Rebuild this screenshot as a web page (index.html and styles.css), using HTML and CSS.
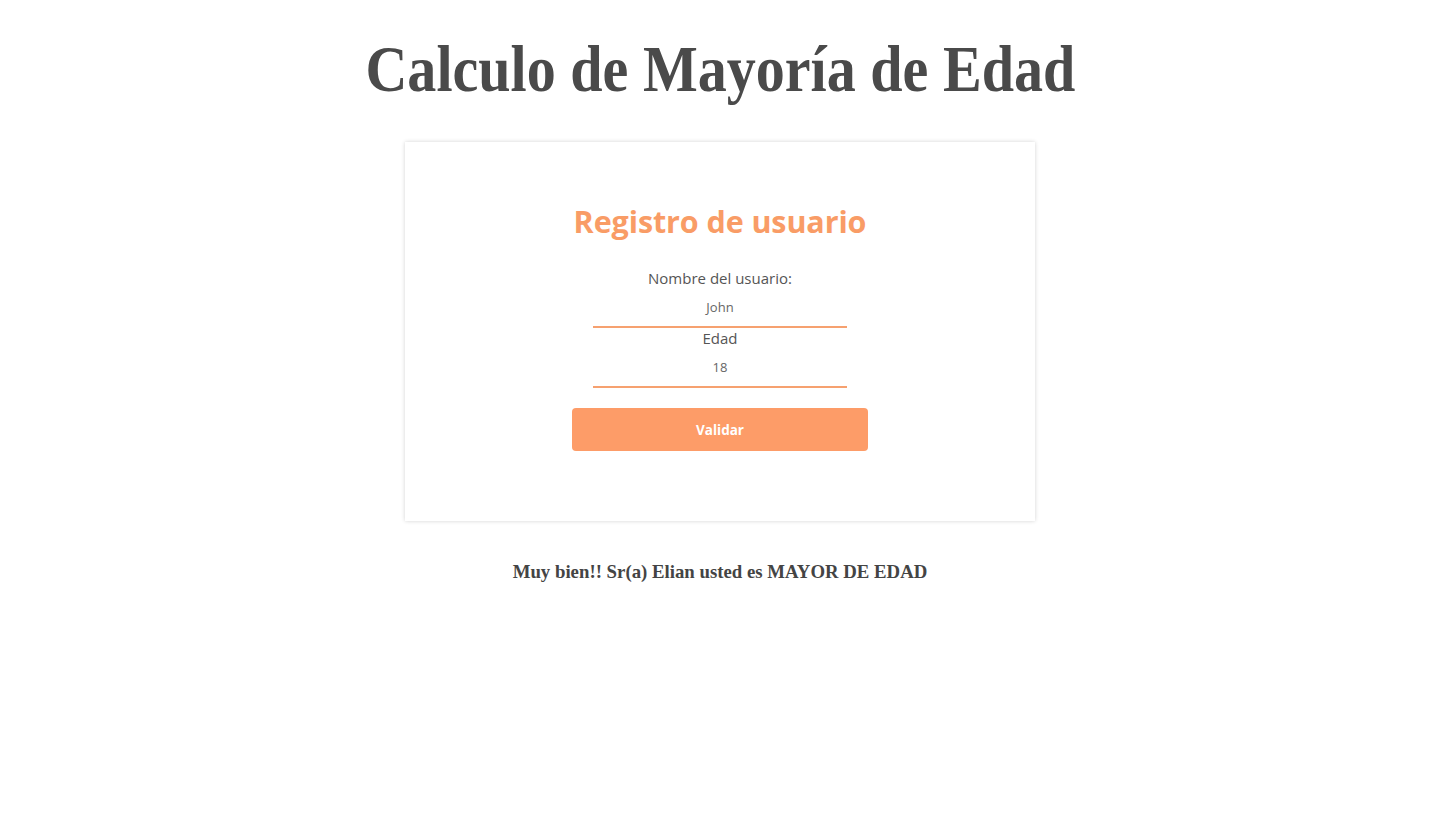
FILE: index.html
```html
<!DOCTYPE html>
<html lang="es">
<head>
<meta charset="utf-8">
<title>Calculo de Mayoría de Edad</title>
<link rel="stylesheet" href="styles.css">
</head>
<body>
<h1 class="title">Calculo de Mayoría de Edad</h1>
<main class="card">
  <h2 class="card-title">Registro de usuario</h2>
  <form class="form">
    <label class="label" for="nombre">Nombre del usuario:</label>
    <input class="field" id="nombre" type="text" value="John">
    <label class="label" for="edad">Edad</label>
    <input class="field" id="edad" type="text" value="18">
    <button class="btn" type="button">Validar</button>
  </form>
</main>
<p class="result">Muy bien!! Sr(a) Elian usted es MAYOR DE EDAD</p>
</body>
</html>
```
FILE: styles.css
```css
* { box-sizing: border-box; }
body {
  margin: 0;
  background: #fff;
  display: flex;
  flex-direction: column;
  align-items: center;
  font-family: "Liberation Serif", serif;
  color: #474747;
}
.title {
  margin: 29px 0 0;
  font-family: "Liberation Serif", serif;
  font-weight: bold;
  font-size: 66px;
  line-height: 80px;
  color: #4a4a4a;
  transform: scaleX(0.88);
  white-space: nowrap;
}
.card {
  margin-top: 33px;
  width: 630px;
  height: 379px;
  background: #fff;
  box-shadow: 0 0 4px rgba(0,0,0,0.18);
  display: flex;
  flex-direction: column;
  align-items: center;
  padding-top: 58px;
}
.card-title {
  margin: 0;
  font-family: "Open Sans", sans-serif;
  font-weight: 700;
  font-size: 30.5px;
  letter-spacing: -0.1px;
  line-height: 42px;
  color: #f99c66;
}
.form {
  margin-top: 26px;
  display: flex;
  flex-direction: column;
  align-items: center;
  font-family: "Open Sans", sans-serif;
}
.label {
  font-size: 15px;
  line-height: 20px;
  color: #555;
}
.field {
  width: 254px;
  height: 40px;
  border: none;
  border-bottom: 2px solid #f6a170;
  outline: none;
  text-align: center;
  font-family: "Open Sans", sans-serif;
  font-size: 13px;
  color: #666;
  background: transparent;
  padding: 0;
}
.btn {
  margin-top: 20px;
  width: 296px;
  height: 43px;
  border: none;
  border-radius: 4px;
  background: #fd9c68;
  color: #fff;
  font-family: "Open Sans", sans-serif;
  font-weight: bold;
  font-size: 13.5px;
}
.result {
  margin: 40px 0 0;
  font-weight: bold;
  font-size: 18.8px;
  color: #444;
}
```
